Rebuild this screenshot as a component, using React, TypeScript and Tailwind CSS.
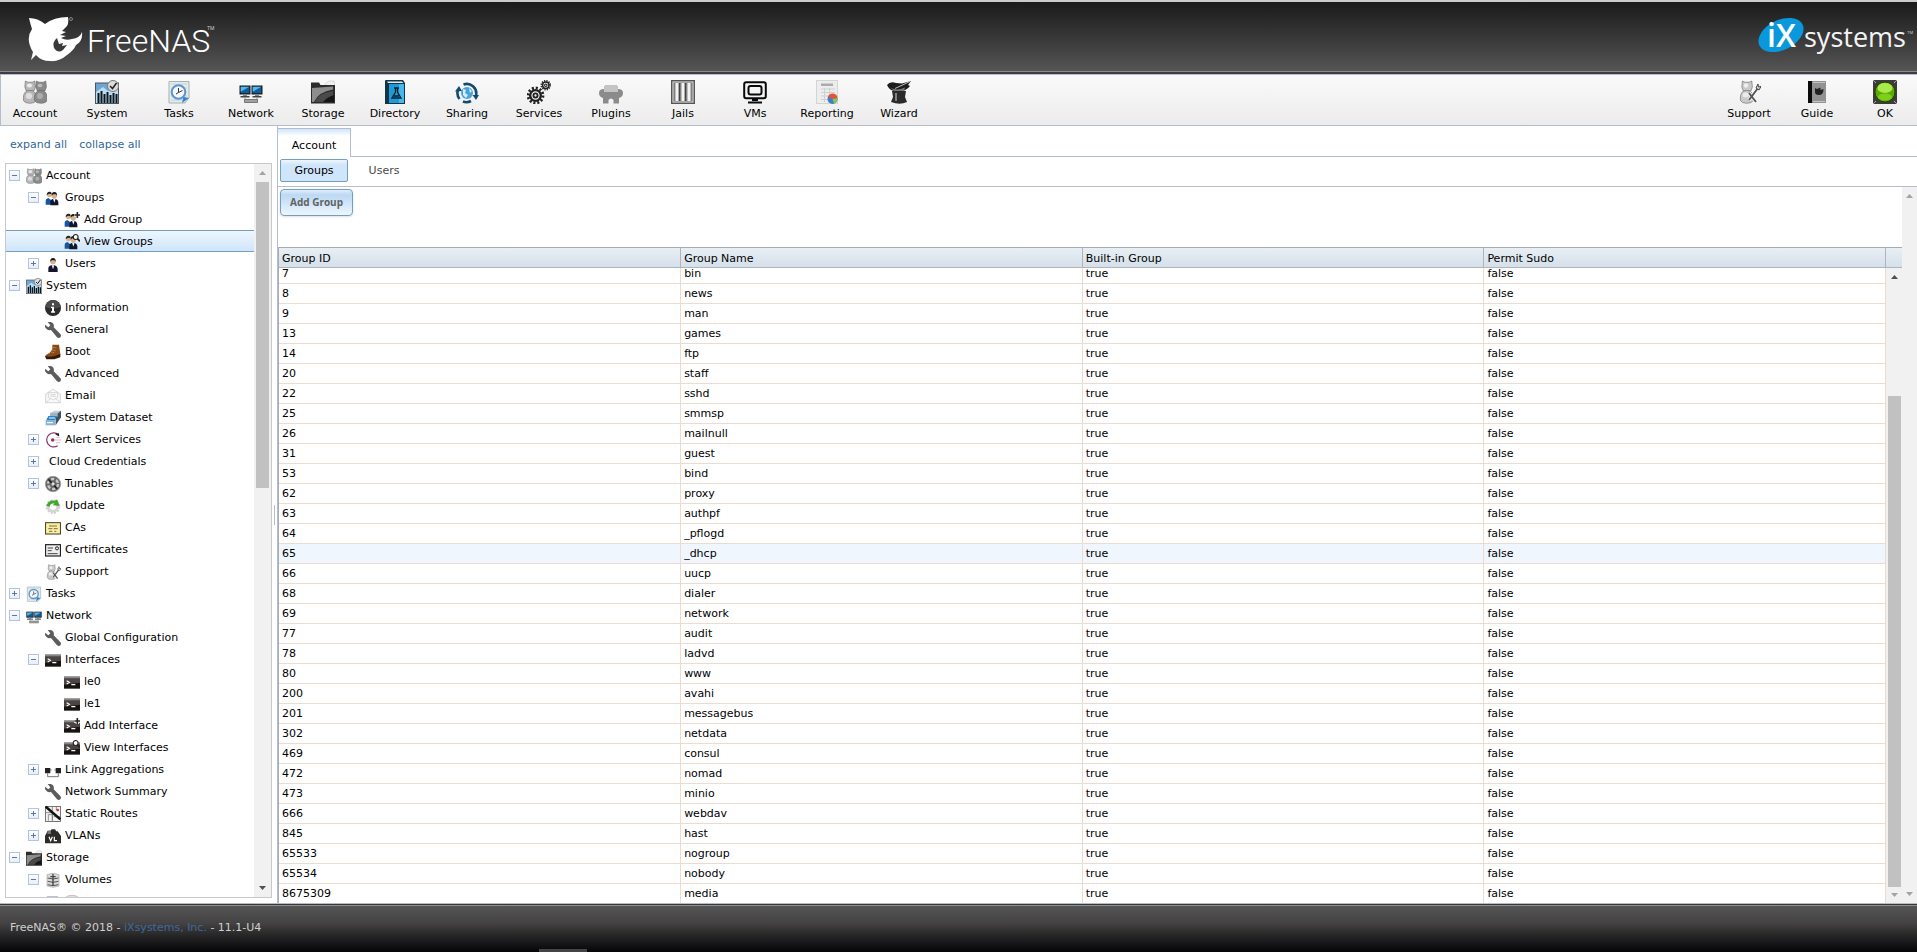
import { useState, type ReactNode } from "react";

type IconName =
  | "account" | "system" | "tasks" | "network" | "storage" | "directory" | "sharing"
  | "services" | "plugins" | "jails" | "vms" | "reporting" | "wizard" | "support"
  | "guide" | "ok" | "groups" | "groupAdd" | "groupView" | "user" | "info" | "wrench"
  | "boot" | "email" | "dataset" | "alert" | "tunables" | "update" | "ca" | "cert"
  | "terminal" | "terminalAdd" | "terminalView" | "lagg" | "routes" | "vlan" | "volumes" | "disk";

const person = (x: number, fill: string) => (
  <g fill={fill} stroke="#666" strokeWidth=".6">
    <path d={`M${x - 0.6} 1l2.500 1.200h4.400l2.500-1.200.6 6-1.500 4h-7.600l-1.500-4z`} />
    <path d={`M${x - 2.6} 17q.5-6.500 6.300-6.500t6.600 6.500v3.500q-1.500 2.800-6.500 2.800t-6.400-2.800z`} />
  </g>
);

const suits = (
  <>
    <path d="M1 22v-6q0-3 4-4l4 3v7z" fill="#1557a0" />
    <circle cx="6.500" cy="7.500" r="3.500" fill="#d8b48c" />
    <path d="M2.500 8q0-6 5-5.500 3 .5 2.500 4l-4-1z" fill="#222" />
    <path d="M8 23v-5q0-4 4.500-5h3q4 1 4.500 5v5z" fill="#10162e" />
    <path d="M12 13l2 6 2-6z" fill="#f4f4f4" />
    <circle cx="14" cy="8.500" r="4" fill="#d8b48c" />
    <path d="M10 9q-.5-6 4-6t4 6l-1.500-2.500h-4.500z" fill="#1a1a1a" />
  </>
);

const prompt = (
  <>
    <rect y="4" width="24" height="18" fill="#171313" />
    <path d="M0 4h24v3H0z" fill="#8a8484" />
    <path d="M0 7h24v6L0 16z" fill="#4b4444" />
    <path d="M4 10l4 2.500-4 2.500M11 16h6" stroke="#fff" strokeWidth="1.800" fill="none" />
  </>
);

const plus = (
  <>
    <path d="M20 0v9M15 4.500h9" stroke="#fff" strokeWidth="5" />
    <path d="M20 0v9M15.500 4.500h9" stroke="#222" strokeWidth="2.400" />
  </>
);

const lens = (
  <g stroke="#222" fill="#fff">
    <circle cx="17.500" cy="4.500" r="3.700" strokeWidth="1.700" />
    <path d="M20 7l4 4" strokeWidth="2.600" />
  </g>
);

const gear = (cx: number, cy: number, r: number) => (
  <g fill="none" stroke="#222">
    <circle cx={cx} cy={cy} r={r} strokeWidth={r * 0.4} strokeDasharray={`${r * 0.28} ${r * 0.2436}`} />
    <circle cx={cx} cy={cy} r={r * 0.72} strokeWidth={r * 0.32} />
    <circle cx={cx} cy={cy} r={r * 0.28} strokeWidth={r * 0.25} />
  </g>
);

const monitor = (x: number) => (
  <>
    <rect x={x} y="5.500" width="11" height="9" fill="#1b1b1b" />
    <path d={`M${x + 1.2} 6.800h8.600v6.400h-8.600z`} fill="#0b5f9e" />
    <path d={`M${x + 1.2} 6.800h8.600l-8.600 5z`} fill="#59b6ec" />
    <path d={`M${x + 3.5} 14.500h4v1.500h-4z`} fill="#888" />
    <path d={`M${x + 1} 16h9v1.500h-9z`} fill="#444" />
  </>
);

const icons: Record<IconName, ReactNode> = {
  account: (
    <>
      {person(3, "#b8b8b8")}
      {person(14, "#8a8a8a")}
      <ellipse cx="6.500" cy="5.500" rx="2.600" ry="2" fill="#ececec" />
      <ellipse cx="17" cy="5.500" rx="2.400" ry="1.800" fill="#bdbdbd" />
      <ellipse cx="6" cy="16" rx="3.200" ry="3" fill="#dedede" />
      <ellipse cx="17" cy="16" rx="3" ry="3" fill="#adadad" />
    </>
  ),
  system: (
    <>
      <rect x=".5" y="3" width="23" height="20.500" fill="#6da6d2" stroke="#4a5560" />
      <path d="M1 12l7-5 5 4 10-4v16H1z" fill="#bcdcf2" />
      <path d="M3.500 13v10M6.500 11v12M9.500 14v9M12.500 12v11M15.500 15v8M18.500 13v10M21.500 14v9" stroke="#10161c" strokeWidth="2" />
      <circle cx="18" cy="6" r="5.500" fill="#ddd" stroke="#777" />
      <path d="M15 6l2.500 2.500L21.500 3" stroke="#222" strokeWidth="1.500" fill="none" />
    </>
  ),
  tasks: (
    <>
      <path d="M2 1.500h20V18l-4 5H2z" fill="#e4ecea" stroke="#a5b2b2" />
      <path d="M4 4h16M4 8h16M4 12h16M4 16h16M4 20h12" stroke="#c2cccc" strokeWidth=".8" />
      <circle cx="11.500" cy="12" r="6.800" fill="#f4f8fc" stroke="#5b94cf" strokeWidth="2" />
      <path d="M11.500 8v4.500l4-2M11.500 12.500L9 14" stroke="#334" fill="none" />
      <path d="M15 23l1.500-6 5.500 1z" fill="#2e86c9" />
    </>
  ),
  network: (
    <>
      {monitor(0.5)}
      {monitor(12.5)}
      <path d="M6 18v2h12v-2" stroke="#999" fill="none" />
      <rect x="5" y="19" width="14" height="4" rx=".8" fill="#777" />
      <path d="M6 21h12" stroke="#ccc" />
    </>
  ),
  storage: (
    <>
      <path d="M14 4l4-3h5l1 6h-9z" fill="#f1f1f1" stroke="#c5c5c5" strokeWidth=".6" />
      <path d="M0 2.500h8l1.500 2.500H24v18.500H0z" fill="#2c2c2c" />
      <path d="M1 8l21-1.500v3Q7 12 3 22H1z" fill="#8d8d8d" />
      <path d="M4 22q3-9 18-11v11z" fill="#4a4a4a" />
      <path d="M12 22q4-5 11-7v7z" fill="#161616" />
    </>
  ),
  directory: (
    <>
      <path d="M2 1q0-1 1-1h17l2 3v21H2z" fill="#123449" />
      <path d="M4 1.500h15l1.500 1.500H5z" fill="#dfeef6" />
      <rect x="6" y="4" width="15" height="19" fill="#1e9bd7" />
      <rect x="16" y="4" width="5" height="19" fill="#45b7ea" />
      <path d="M11 8h5M12.500 8v4L9 18h9l-3.500-6V8M11 16h5" stroke="#08212e" strokeWidth="1.300" fill="none" />
    </>
  ),
  sharing: (
    <>
      <circle cx="12" cy="13" r="6" fill="#4ba3da" />
      <path d="M8 9l3 1-1 3 3 2-2 3-3-3zM14 8l3 3-2 2z" fill="#d6eefa" />
      <path d="M8.500 4.500A9.500 9.500 0 0 1 21 15.500M3 10a9.500 9.500 0 0 0 1.500 9M8 21.500a9.500 9.500 0 0 0 8-.5" stroke="#124b70" strokeWidth="2.600" fill="none" />
      <path d="M17.500 15h6.500l-3 5zM0 11.500L4 6l3 5z" fill="#124b70" />
    </>
  ),
  services: (
    <>
      {gear(8.5, 15.5, 7.4)}
      {gear(18.8, 5.2, 4.4)}
    </>
  ),
  plugins: (
    <>
      <path d="M5 9q0-4 3-4h8q3 0 3 4 5 0 5 4t-4 5v5.500h-5.500V20q-2.500-3-5 0v3.500H4V18q-4-1-4-5t5-4z" fill="#8b8b8b" />
      <path d="M5 9q0-4 3-4h8q3 0 3 4v3H5z" fill="#c4c4c4" />
    </>
  ),
  jails: (
    <>
      <rect x=".7" y=".7" width="22.600" height="22.600" fill="#d6d6d6" stroke="#555" strokeWidth="1.400" />
      <rect x="3" y="3" width="18" height="18" fill="#8a8a8a" stroke="#777" />
      <path d="M6 3v18M12 3v18M18 3v18" stroke="#f2f2f2" strokeWidth="3" />
      <path d="M8.500 3v18M14.500 3v18" stroke="#444" strokeWidth="1.300" />
    </>
  ),
  vms: (
    <g fill="none" stroke="#0a0a0a" strokeWidth="2">
      <rect x="1.200" y="2.200" width="21.600" height="16" rx="2" />
      <rect x="5.500" y="6" width="13" height="8.500" rx="2" />
      <path d="M9 20h6M5 22.500h14" />
    </g>
  ),
  reporting: (
    <>
      <rect x="1.500" y=".5" width="21" height="23" fill="#ededed" stroke="#d4d4d4" />
      <path d="M6 3.500h12v2.500H6z" fill="#ababab" />
      <path d="M6 9h14M6 12.500h14M6 16h7M6 19.500h7M9.500 8v14M14.500 8v6" stroke="#cfcfcf" />
      <circle cx="17.500" cy="19" r="5" fill="#3b82c4" />
      <path d="M17.500 19l-4.500-2.500a5 5 0 0 1 9.500 1z" fill="#e5533d" />
      <path d="M17.500 19l5-1a5 5 0 0 1-3.500 5.500z" fill="#8dc255" />
    </>
  ),
  wizard: (
    <>
      <path d="M5 11h14l-1 6 2 5q-7 3.500-16 0l2-5z" fill="#2b2b2b" />
      <path d="M0 5q3-4 9-2l6 .5L24 1l-3 4 2 1q-4 6-15 5.500Q2 10 0 5z" fill="#1d1d1d" />
      <path d="M4 8q6 3 14-.5l-1 3.500H7z" fill="#777" />
      <path d="M8 8.500L23 1.500" stroke="#ccc" strokeWidth=".9" />
      <path d="M9 13v8" stroke="#8a8a8a" strokeWidth="1.800" />
    </>
  ),
  support: (
    <>
      {person(6, "#c9c9c9")}
      <circle cx="9" cy="5.500" r="2.200" fill="#efefef" />
      <ellipse cx="8.500" cy="15" rx="3" ry="2.500" fill="#ebebeb" />
      <path d="M12 13l7 9M21 8l-9 12" stroke="#fff" strokeWidth="3.600" />
      <path d="M12 13l7 9M21 8l-9 12" stroke="#555" strokeWidth="2" />
      <path d="M19 8l2-4 .5 3 2.500-.5-2 3.500z" fill="#ddd" stroke="#444" />
    </>
  ),
  guide: (
    <>
      <rect x="3" y="1" width="18" height="22" fill="#929292" />
      <rect x="3" y="1" width="4" height="22" fill="#0b0b0b" />
      <path d="M8 2.500h12M8 21.500h12" stroke="#c2c2c2" />
      <path d="M10 8l2 1 3.500-1.500v2.500l3-1q0 6-4.500 6t-4-4z" fill="#222" />
    </>
  ),
  ok: (
    <>
      <rect width="24" height="24" fill="#3c3c3c" />
      <path d="M0 0l3 3M24 0l-3 3M0 24l3-3M24 24l-3-3" stroke="#aaa" />
      <circle cx="12" cy="12" r="10" fill="#5cab00" stroke="#244600" />
      <ellipse cx="12" cy="8" rx="7.500" ry="5" fill="#a8ea4b" />
      <ellipse cx="12" cy="17" rx="7" ry="3.500" fill="#7fce1a" />
    </>
  ),
  groups: suits,
  groupAdd: <>{suits}{plus}</>,
  groupView: <>{suits}{lens}</>,
  user: (
    <>
      <path d="M5 24v-5q0-4 4.500-5h5q4 1 4.500 5v5z" fill="#10162e" />
      <path d="M10 14l2 6 2-6z" fill="#f4f4f4" />
      <circle cx="12" cy="8.500" r="4" fill="#d8b48c" />
      <path d="M8 9q-.5-6 4-6t4 6l-1.500-2.500H10z" fill="#1a1a1a" />
    </>
  ),
  info: (
    <>
      <circle cx="12" cy="12" r="12" fill="#2b2b2b" />
      <path d="M1 11a11 11 0 0 1 22 0Q12 15 1 11z" fill="#4b4b4b" />
      <path d="M10.500 5h3v3h-3zM9 10h4.500v7H15v2H9v-2h1.500v-5H9z" fill="#fff" />
    </>
  ),
  wrench: (
    <path d="M4 0q5-1 8 2 2 3 1 6l10 10q2 3 0 5t-5 0L9 12q-4 1-7-2Q-1 7 0 4l5 4 3-3z" fill="#5c5c5e" />
  ),
  boot: (
    <>
      <path d="M11 1h10l2 14-1 4-9 2H2q-3-3 0-5 6-2 9-8z" fill="#8a4a17" />
      <path d="M0 18q6 2 14 0l9-3v5l-9 3H2z" fill="#33190a" />
      <path d="M12 5l5 1M11 9l5 1M9 12l5 1" stroke="#d39247" />
    </>
  ),
  email: (
    <g fill="#fafafa" stroke="#c4c4c4">
      <path d="M1 9l11-7 11 7v13H1z" />
      <path d="M5 7h14v7l-7 4-7-4z" />
      <path d="M1 22l8-7M23 22l-8-7M8 10h8M8 12.500h8" />
    </g>
  ),
  dataset: (
    <>
      <path d="M9 4l5-3h10l-5 5z" fill="#c3ced6" />
      <path d="M18 6l6-5v10l-8 12V12z" fill="#40505d" />
      <path d="M8 4h11v6H7z" fill="#9fb4c4" />
      <path d="M5 9h13l-3 6H2z" fill="#2c86c4" />
      <path d="M1 15h15v8H1z" fill="#8bb2d0" />
      <path d="M6 12h9M3 19h9" stroke="#eef5fa" strokeWidth="1.800" />
    </>
  ),
  alert: (
    <>
      <path d="M21 5A10.500 10.500 0 1 0 19 20.500" stroke="#8d3a74" strokeWidth="1.800" fill="none" />
      <path d="M16 2.500l5 3M20 2v3" stroke="#222" strokeWidth="2" />
      <circle cx="11.500" cy="12" r="2.600" fill="#9b2d62" />
      <path d="M14 12h10M17 8h6M17 16h6" stroke="#e48a96" strokeWidth="1.600" strokeDasharray="2 1" />
    </>
  ),
  tunables: (
    <>
      <circle cx="12" cy="12" r="11.500" fill="#666" stroke="#999" />
      <circle cx="12" cy="12" r="7.500" stroke="#c8c8c8" strokeWidth="3.500" strokeDasharray="5 2.850" fill="none" />
      <path d="M5 5l13 14" stroke="#222" strokeWidth="2.500" />
      <circle cx="12" cy="12" r="2.500" fill="#ddd" />
    </>
  ),
  update: (
    <>
      <circle cx="12" cy="13" r="9" stroke="#cfcfcf" strokeWidth="4" strokeDasharray="3 1.712" fill="none" />
      <circle cx="12" cy="13" r="7" stroke="#d4d4d4" strokeWidth="4" fill="none" />
      <path d="M2 12Q5 2 15 4l3-2 4 10-10-1 2-3q-6 0-7 5z" fill="#43a82e" />
    </>
  ),
  ca: (
    <>
      <rect x=".8" y="4" width="22.400" height="17" fill="#fbf0a0" stroke="#4d4630" strokeWidth="1.600" />
      <path d="M6 9h12M5 13h6M13 13h6M6 17h5M14 17h3" stroke="#77704a" strokeWidth="1.500" />
    </>
  ),
  cert: (
    <>
      <rect x=".8" y="4" width="22.400" height="17" fill="#eee" stroke="#222" strokeWidth="1.800" />
      <path d="M4 9h8M4 13h6M4 17.500h15" stroke="#444" strokeWidth="1.500" />
      <circle cx="18" cy="9.500" r="2.300" fill="none" stroke="#223" strokeWidth="1.500" />
    </>
  ),
  terminal: prompt,
  terminalAdd: <>{prompt}{plus}</>,
  terminalView: <>{prompt}{lens}</>,
  lagg: (
    <>
      <path d="M0 9h8v8H0zM16 9h8v8h-8z" fill="#222" />
      <path d="M4 17v5h16v-5M8 12h2M14 12h2" stroke="#555" strokeWidth="1.200" fill="none" />
    </>
  ),
  routes: (
    <>
      <rect x=".8" y=".8" width="22.400" height="22.400" fill="#f3f3f3" stroke="#555" strokeWidth="1.200" />
      <path d="M1 10h10M5 22v-9h6v9M11 1v21M13 16h10M17 1v5" stroke="#777" strokeWidth="1.200" fill="none" />
      <path d="M1 1l22 19" stroke="#111" strokeWidth="4" />
      <circle cx="19" cy="6" r="2" fill="#e02b2b" />
    </>
  ),
  vlan: (
    <>
      <path d="M0 23V12l4-8h4l2-2h5l2 3h2l5 7v11z" fill="#2d2a2a" />
      <path d="M5 4h4v5H3z" fill="#777" />
      <path d="M6 13l2.500 6 2.500-6M14 13v6h4" stroke="#fff" strokeWidth="1.800" fill="none" />
    </>
  ),
  volumes: (
    <>
      <path d="M3 4q9-4 18 0v17q-9 4-18 0z" fill="#d9d9d9" stroke="#aaa" />
      <path d="M4 9q8 3 16 0M4 14q8 3 16 0M4 19q8 3 16 0" stroke="#555" strokeWidth="1.500" fill="none" />
      <path d="M12 3v18M8 7h8" stroke="#444" strokeWidth="2" />
    </>
  ),
  disk: <ellipse cx="12" cy="7" rx="10" ry="5" fill="#e3e3e3" stroke="#aaa" />,
};

function Icon({ name, className }: { name: IconName; className: string }) {
  return (
    <svg viewBox="0 0 24 24" className={className} aria-hidden="true">
      {icons[name]}
    </svg>
  );
}

const mainTools: { icon: IconName; label: string }[] = [
  { icon: "account", label: "Account" },
  { icon: "system", label: "System" },
  { icon: "tasks", label: "Tasks" },
  { icon: "network", label: "Network" },
  { icon: "storage", label: "Storage" },
  { icon: "directory", label: "Directory" },
  { icon: "sharing", label: "Sharing" },
  { icon: "services", label: "Services" },
  { icon: "plugins", label: "Plugins" },
  { icon: "jails", label: "Jails" },
  { icon: "vms", label: "VMs" },
  { icon: "reporting", label: "Reporting" },
  { icon: "wizard", label: "Wizard" },
];

const sideTools: { icon: IconName; label: string }[] = [
  { icon: "support", label: "Support" },
  { icon: "guide", label: "Guide" },
  { icon: "ok", label: "OK" },
];

interface TreeNode {
  level: 0 | 1 | 2;
  label: string;
  icon?: IconName;
  toggle?: "open" | "closed";
}

const tree: TreeNode[] = [
  { level: 0, label: "Account", icon: "account", toggle: "open" },
  { level: 1, label: "Groups", icon: "groups", toggle: "open" },
  { level: 2, label: "Add Group", icon: "groupAdd" },
  { level: 2, label: "View Groups", icon: "groupView" },
  { level: 1, label: "Users", icon: "user", toggle: "closed" },
  { level: 0, label: "System", icon: "system", toggle: "open" },
  { level: 1, label: "Information", icon: "info" },
  { level: 1, label: "General", icon: "wrench" },
  { level: 1, label: "Boot", icon: "boot" },
  { level: 1, label: "Advanced", icon: "wrench" },
  { level: 1, label: "Email", icon: "email" },
  { level: 1, label: "System Dataset", icon: "dataset" },
  { level: 1, label: "Alert Services", icon: "alert", toggle: "closed" },
  { level: 1, label: "Cloud Credentials", toggle: "closed" },
  { level: 1, label: "Tunables", icon: "tunables", toggle: "closed" },
  { level: 1, label: "Update", icon: "update" },
  { level: 1, label: "CAs", icon: "ca" },
  { level: 1, label: "Certificates", icon: "cert" },
  { level: 1, label: "Support", icon: "support" },
  { level: 0, label: "Tasks", icon: "tasks", toggle: "closed" },
  { level: 0, label: "Network", icon: "network", toggle: "open" },
  { level: 1, label: "Global Configuration", icon: "wrench" },
  { level: 1, label: "Interfaces", icon: "terminal", toggle: "open" },
  { level: 2, label: "le0", icon: "terminal" },
  { level: 2, label: "le1", icon: "terminal" },
  { level: 2, label: "Add Interface", icon: "terminalAdd" },
  { level: 2, label: "View Interfaces", icon: "terminalView" },
  { level: 1, label: "Link Aggregations", icon: "lagg", toggle: "closed" },
  { level: 1, label: "Network Summary", icon: "wrench" },
  { level: 1, label: "Static Routes", icon: "routes", toggle: "closed" },
  { level: 1, label: "VLANs", icon: "vlan", toggle: "closed" },
  { level: 0, label: "Storage", icon: "storage", toggle: "open" },
  { level: 1, label: "Volumes", icon: "volumes", toggle: "open" },
  { level: 2, label: "/mnt/tank", icon: "disk", toggle: "open" },
];

const indent = ["pl-[3px]", "pl-[22px]", "pl-[41px]"];

const groups: [number, string][] = [
  [7, "bin"], [8, "news"], [9, "man"], [13, "games"], [14, "ftp"], [20, "staff"],
  [22, "sshd"], [25, "smmsp"], [26, "mailnull"], [31, "guest"], [53, "bind"],
  [62, "proxy"], [63, "authpf"], [64, "_pflogd"], [65, "_dhcp"], [66, "uucp"],
  [68, "dialer"], [69, "network"], [77, "audit"], [78, "ladvd"], [80, "www"],
  [200, "avahi"], [201, "messagebus"], [302, "netdata"], [469, "consul"],
  [472, "nomad"], [473, "minio"], [666, "webdav"], [845, "hast"],
  [65533, "nogroup"], [65534, "nobody"], [8675309, "media"],
];

const columns = ["Group ID", "Group Name", "Built-in Group", "Permit Sudo"];

function Arrow({ dir, className }: { dir: "up" | "down"; className?: string }) {
  return (
    <svg viewBox="0 0 7 4" className={`h-1 w-[7px] ${className ?? ""}`} aria-hidden="true">
      <path d={dir === "up" ? "M0 4L3.500 0 7 4z" : "M0 0l3.500 4L7 0z"} fill="currentColor" />
    </svg>
  );
}

function FreeNasLogo() {
  return (
    <svg viewBox="0 0 200 50" className="h-[50px] w-[200px]" role="img" aria-label="FreeNAS">
      <path
        d="M1 4Q10 4 17 10 26 3 40 3 41 9 39 12L34 17 38 18 32 21 38 22 33 24Q38 27 44 25 52 24 54 18 55 27 48 31 46 36 39 41 31 48 22 47 13 47 8 41L3 46 5 38Q-3 25 4 15 2 9 1 4z"
        fill="#fff"
      />
      <path d="M29 24q-5 4-3 10 4 6 9 2l4-5-5 1 1-3-4 1z" fill="#3a3a3a" />
      <circle cx="43" cy="5" r="1.500" fill="none" stroke="#999" strokeWidth=".8" />
      <text x="59" y="38" fontFamily="Roboto, sans-serif" fontWeight="300" fontSize="32" fill="#fff">
        FreeNAS
      </text>
      <text x="179" y="16" fontFamily="Roboto, sans-serif" fontSize="5" fill="#ccc">
        TM
      </text>
    </svg>
  );
}

function IxLogo() {
  return (
    <svg viewBox="0 0 156 50" className="h-[50px] w-[156px]" role="img" aria-label="iXsystems">
      <ellipse cx="23" cy="21" rx="24" ry="15" transform="rotate(-26 23 21)" fill="#0a98dc" />
      <text x="9" y="33" fontFamily="Open Sans, sans-serif" fontWeight="600" fontSize="32" fill="#fff">
        iX
      </text>
      <text x="46" y="33" fontFamily="Open Sans, sans-serif" fontWeight="400" fontSize="27" fill="#f4f4f4">
        systems
      </text>
      <text x="149" y="20" fontFamily="Roboto, sans-serif" fontSize="4" fill="#ccc">
        TM
      </text>
    </svg>
  );
}

export default function App() {
  const [selected, setSelected] = useState("View Groups");

  return (
    <div className="flex h-screen flex-col overflow-hidden bg-white font-['DejaVu_Sans',sans-serif] text-[11px] leading-4 text-black">
      <header className="flex h-[74px] shrink-0 items-start justify-between border-t-2 border-b-2 border-t-[#c9cbcc] border-b-[#3c3c42] bg-linear-to-b from-[#1b1b1b] to-[#565656] pt-3 pr-[3px] pl-7 shadow-[inset_0_-1px_0_#8c8c8c]">
        <FreeNasLogo />
        <IxLogo />
      </header>

      {/* Toolbar */}
      <nav className="flex h-[52px] shrink-0 justify-between border border-r-0 border-[#b5bccd] bg-linear-to-b from-[#fafafa] to-[#ececec]">
        <div className="flex gap-1">
          {mainTools.map((tool) => (
            <button key={tool.label} type="button" className="flex w-[68px] flex-col items-center gap-0.5 pt-[5px]">
              <Icon name={tool.icon} className="size-6" />
              <span>{tool.label}</span>
            </button>
          ))}
        </div>
        <div className="flex gap-1">
          {sideTools.map((tool) => (
            <button key={tool.label} type="button" className="flex w-16 flex-col items-center gap-0.5 pt-[5px]">
              <Icon name={tool.icon} className="size-6" />
              <span>{tool.label}</span>
            </button>
          ))}
        </div>
      </nav>

      <div className="flex min-h-0 flex-1">
        {/* Sidebar */}
        <aside className="flex w-[272px] shrink-0 flex-col pb-[5px] pl-[5px]">
          <div className="flex h-[37px] shrink-0 gap-3 pt-[11px] pl-[5px] text-[#336699]">
            <a href="#expand">expand all</a>
            <a href="#collapse">collapse all</a>
          </div>
          <div className="flex min-h-0 flex-1 border border-[#c8c8c8]">
            <ul className="min-w-0 flex-1 overflow-hidden">
              {tree.map((node) => (
                <li
                  key={`${node.level}-${node.label}`}
                  className={`flex h-[22px] items-center ${indent[node.level]} ${
                    node.label === selected
                      ? "border-y border-[#759dc0] bg-linear-to-b from-[#eef6fe] to-[#cfe5fa]"
                      : ""
                  }`}
                >
                  {node.toggle ? (
                    <button
                      type="button"
                      aria-label={`Toggle ${node.label}`}
                      className="flex size-[11px] shrink-0 items-center justify-center border border-[#b4c3e2] bg-linear-to-b from-white to-[#e8eef8]"
                    >
                      <svg viewBox="0 0 7 7" className="size-[7px]" aria-hidden="true">
                        <path d={node.toggle === "open" ? "M1 3.500h5" : "M1 3.500h5M3.500 1v5"} stroke="#5a76ae" />
                      </svg>
                    </button>
                  ) : (
                    <span className="w-[11px] shrink-0" />
                  )}
                  <a
                    href={`#${node.label}`}
                    onClick={() => setSelected(node.label)}
                    className={`flex items-center gap-1 pt-0.5 whitespace-nowrap ${node.icon ? "pl-1.5" : "pl-2.5"}`}
                  >
                    {node.icon && <Icon name={node.icon} className="size-4" />}
                    <span>{node.label}</span>
                  </a>
                </li>
              ))}
            </ul>
            <div className="flex w-[17px] flex-col items-center bg-[#f1f1f1]">
              <Arrow dir="up" className="my-[7px] shrink-0 text-[#a3a3a3]" />
              <div className="h-[306px] w-[13px] bg-[#c1c1c1]" />
              <Arrow dir="down" className="mt-auto mb-[7px] shrink-0 text-[#505050]" />
            </div>
          </div>
        </aside>

        <div className="flex w-[5px] shrink-0 items-center justify-center">
          <div className="h-5 w-px bg-[#b5bccd]" />
        </div>

        {/* Content */}
        <main className="flex min-w-0 flex-1 flex-col border-l border-[#b5bccd] pt-0.5">
          <div className="flex h-[29px] shrink-0">
            <button
              type="button"
              className="w-[73px] border-t border-r border-[#b5bccd] bg-linear-to-b from-[#cfe5fa] via-white via-25% to-white pt-1.5"
            >
              Account
            </button>
            <div className="flex-1 border-b border-[#b5bccd]" />
          </div>
          <div className="flex h-[30px] shrink-0 items-start gap-0.5 border-b border-[#b5bccd] pt-0.5 pl-0.5">
            <button
              type="button"
              className="h-[23px] w-[68px] rounded-xs border border-[#759dc0] bg-linear-to-b from-[#eef6fe] via-[#cfe5fa] via-25% to-[#cfe5fa]"
            >
              Groups
            </button>
            <button type="button" className="h-[23px] w-[68px] text-[#494949]">
              Users
            </button>
          </div>

          <div className="flex min-h-0 flex-1">
            <section className="flex min-w-0 flex-1 flex-col">
              <div className="h-[60px] shrink-0 pt-0.5 pl-0.5">
                <button
                  type="button"
                  className="h-[27px] w-[73px] rounded-sm border border-[#759dc0] bg-linear-to-b from-[#e1eefb] via-[#bcd8f4] via-20% to-[#eef6fe] pb-0.5 font-['Open_Sans',sans-serif] text-[10px] font-bold text-[#5f6264] shadow-sm"
                >
                  Add Group
                </button>
              </div>

              <div className="flex min-h-0 flex-1 flex-col border-l border-[#a9adb3]">
                <div className="flex shrink-0 border-y border-t-[#a5acb0] border-b-[#b0b5ba] bg-linear-to-b from-[#e9eff4] to-[#d5e0ea]">
                  <table className="w-full flex-1 table-fixed border-collapse">
                    <thead>
                      <tr className="h-[19px]">
                        {columns.map((column) => (
                          <th key={column} className="border-r border-[#b0b5bd] px-[3px] pt-0.5 text-left font-normal">
                            {column}
                          </th>
                        ))}
                      </tr>
                    </thead>
                  </table>
                  <div className="w-4 shrink-0" />
                </div>
                <div className="flex min-h-0 flex-1">
                  {/* scrolled to the last row */}
                  <div className="flex min-w-0 flex-1 flex-col justify-end overflow-hidden">
                    <table aria-label="Groups" className="w-full table-fixed border-collapse">
                      <tbody>
                        {groups.map(([id, name]) => (
                          <tr
                            key={id}
                            className={`h-5 border-b border-[#eddcce] last:border-b-0 ${id === 65 ? "bg-[#eff6fd]" : ""}`}
                          >
                            {[id, name, "true", "false"].map((value, i) => (
                              <td key={i} className="border-r border-[#eddcce] px-[3px] pt-0.5">
                                {value}
                              </td>
                            ))}
                          </tr>
                        ))}
                      </tbody>
                    </table>
                  </div>
                  <div className="flex w-4 shrink-0 flex-col items-center bg-[#f1f1f1]">
                    <Arrow dir="up" className="mt-[7px] shrink-0 text-[#505050]" />
                    <div className="mt-auto h-[491px] w-[13px] bg-[#c1c1c1]" />
                    <Arrow dir="down" className="my-1.5 shrink-0 text-[#a3a3a3]" />
                  </div>
                </div>
              </div>
            </section>
            <div className="flex w-[15px] shrink-0 flex-col items-center justify-between bg-[#f1f1f1] py-[7px] text-[#a3a3a3]">
              <Arrow dir="up" />
              <Arrow dir="down" />
            </div>
          </div>
        </main>
      </div>

      <footer className="relative h-[49px] shrink-0 border-t border-[#b9bdc0] bg-linear-to-b from-[#585858] via-[#444242] via-40% to-[#060608] px-2.5 pt-4 text-[#d0d0d0] shadow-[inset_0_1px_0_#34373b,inset_0_2px_0_#8e8e8e]">
        FreeNAS® © 2018 -{" "}
        <a href="#ixsystems" className="text-[#3d6a9c]">
          iXsystems, Inc.
        </a>{" "}
        - 11.1-U4
        <div className="absolute bottom-0 left-[539px] h-[3px] w-12 bg-[#444]" />
      </footer>
    </div>
  );
}
